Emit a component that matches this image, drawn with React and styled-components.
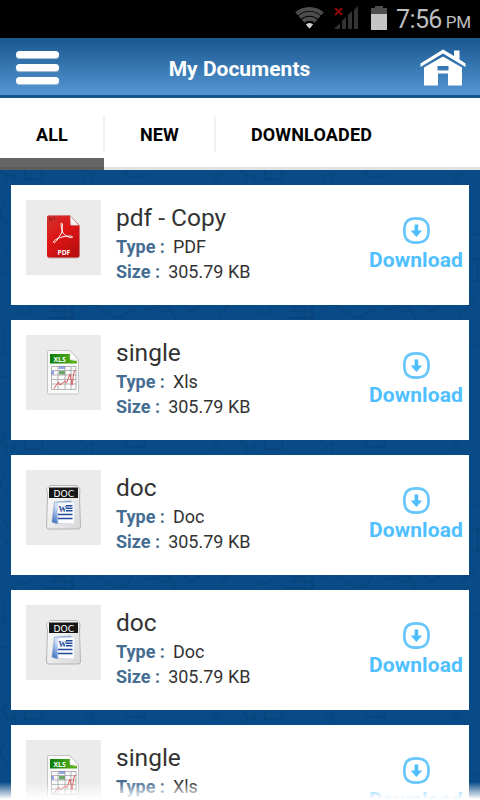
import React, { useState } from 'react'
import styled, { createGlobalStyle } from 'styled-components'

const colors = {
  navy: '#084b86',
  label: '#456d92',
  text: '#333333',
  sky: '#4fc0ff',
}

const docs = [
  { id: 1, name: 'pdf - Copy', type: 'PDF', size: '305.79 KB' },
  { id: 2, name: 'single', type: 'Xls', size: '305.79 KB' },
  { id: 3, name: 'doc', type: 'Doc', size: '305.79 KB' },
  { id: 4, name: 'doc', type: 'Doc', size: '305.79 KB' },
  { id: 5, name: 'single', type: 'Xls', size: '305.79 KB' },
]

const tabs = [
  { label: 'ALL', width: 104 },
  { label: 'NEW', width: 111 },
  { label: 'DOWNLOADED', width: 193 },
]

export default function App() {
  const [tab, setTab] = useState('ALL')

  return (
    <Screen>
      <GlobalStyle />
      <StatusBar>
        <StatusIcons />
        <Clock>7:56</Clock>
        <Meridiem>PM</Meridiem>
      </StatusBar>
      <Header>
        <MenuButton aria-label="Menu"><Line /><Line /><Line /></MenuButton>
        <Title>My Documents</Title>
        <HomeIcon />
      </Header>
      <Tabs>
        {tabs.map((t) => (
          <Tab key={t.label} $width={t.width} $active={tab === t.label} onClick={() => setTab(t.label)}>{t.label}</Tab>
        ))}
      </Tabs>
      <Content>
        <Doodles />
        <List>
          {docs.map((doc) => <DocumentCard key={doc.id} {...doc} />)}
        </List>
      </Content>
      <Fade />
    </Screen>
  )
}

function DocumentCard({ name, type, size }) {
  return (
    <Card>
      <Thumb>
        {type === 'PDF' && <PdfIcon />}
        {type === 'Xls' && <XlsIcon />}
        {type === 'Doc' && <DocIcon />}
      </Thumb>
      <Info>
        <Name>{name}</Name>
        <Meta><Label>Type :</Label><Value>{type}</Value></Meta>
        <Meta><Label>Size :</Label><Value>{size}</Value></Meta>
      </Info>
      <Download>
        <DownloadIcon />
        <DownloadText>Download</DownloadText>
      </Download>
    </Card>
  )
}

function StatusIcons() {
  return (
    <svg width="96" height="38" viewBox="294 0 96 38">
      <defs>
        <clipPath id="wifi"><path d="M309.500 28.500L294.500 11.500Q309.500 2 324.500 11.500Z" /></clipPath>
      </defs>
      <g clipPath="url(#wifi)" fill="none" stroke="#4d4d4d" strokeWidth="4">
        <circle cx="309.500" cy="28.500" r="19.600" />
        <circle cx="309.500" cy="28.500" r="14.700" />
        <circle cx="309.500" cy="28.500" r="9.800" />
        <circle cx="309.500" cy="28.500" r="3" fill="#d0d0d0" stroke="#d0d0d0" strokeWidth="5" />
      </g>
      <path d="M334 29L340 23V29ZM342 21L346 17V29H342ZM348 15L352 11V29H348ZM354 10L358 6V29H354Z" fill="#333" />
      <path d="M335 8L342 15M342 8L335 15" stroke="#8d0808" strokeWidth="2" />
      <path d="M371 8H375V6H383V8H387V14H371Z" fill="#4d4d4d" />
      <path d="M371 14H387V30H371Z" fill="#c5c5c5" />
    </svg>
  )
}

function HomeIcon() {
  return (
    <HomeSvg width="46" height="38" viewBox="0 0 46 38" fill="#fff">
      <path d="M.5 14.500L23 .5L34 7V1.500H39.500V10.500L45.500 14.500V18L23 4.500L.5 18Z" />
      <path fillRule="evenodd" d="M4 18.500L23 7.500L42 18.500V36.500H28V24.500H18V36.500H4ZM17.500 17V21.500H28.500V17Z" />
    </HomeSvg>
  )
}

function DownloadIcon() {
  return (
    <svg width="28" height="28" viewBox="0 0 28 28">
      <path d="M14.300 2.300C22.800 2.300 26.600 6 26.600 14.500S22.800 26.700 14.300 26.700S2.300 23 2.300 14.500S5.800 2.300 14.300 2.300Z" fill="none" stroke="#67c6fc" strokeWidth="2.700" />
      <path d="M12.600 8.500H16.200V14.500H20.200L14.400 21L8.700 14.500H12.600Z" fill="#4dbdfb" />
    </svg>
  )
}

function PdfIcon() {
  return (
    <svg width="75" height="75" viewBox="0 0 75 75">
      <defs>
        <linearGradient id="pdfRed" x1="0" y1="0" x2=".7" y2="1">
          <stop offset="0" stopColor="#cf3432" /><stop offset=".5" stopColor="#df1515" /><stop offset="1" stopColor="#b90f10" />
        </linearGradient>
      </defs>
      <path d="M22.500 15.500H44L53.500 26V56.500Q53.500 58.500 51.500 58.500H23.500Q21.500 58.500 21.500 56.500V17Q21.500 15.500 22.500 15.500Z" fill="#a99" opacity=".6" />
      <path d="M22.500 15.500H44L53.500 25.500V55.500Q53.500 57.500 51.500 57.500H23Q21 57.500 21 55.500V17Q21 15.500 22.500 15.500Z" fill="url(#pdfRed)" />
      <path d="M44 15.500L53 25.500L44.500 25.300Z" fill="#f5f5f5" stroke="#a77" strokeWidth=".4" />
      <path d="M23.500 20.500V17.500L25.500 20.500V17.500M27 17.500H28.500V20" fill="none" stroke="#8e191c" strokeWidth=".8" />
      <path d="M35.500 23C37 23 36.500 29 35.500 33C32.500 38 29.500 43.300 27.500 42.500C26.500 41 31 38.500 36 37C42 35.500 47 35.800 46.500 37.300C44 38.500 40 36 37.300 33.500C35.500 30 34.500 24 35.500 23Z" fill="none" stroke="#fff" strokeWidth="1" />
      <IconText x="31.500" y="54.900" fill="#fff" fontSize="7.300" textLength="12.700">PDF</IconText>
    </svg>
  )
}

function XlsIcon() {
  return (
    <svg width="75" height="75" viewBox="0 0 75 75">
      <defs>
        <linearGradient id="xlsGreen"><stop stopColor="#087d0a" /><stop offset="1" stopColor="#63b719" /></linearGradient>
      </defs>
      <path d="M23 15.500H44L52.500 24.500V57.500Q52.500 59 51 59H23Q21.500 59 21.500 57.500V17Q21.500 15.500 23 15.500Z" fill="#fafafa" stroke="#c4c4c4" />
      <path d="M24 19H44V25L51 26V28.500H24Z" fill="url(#xlsGreen)" />
      <path d="M44 16L52 25.500L44 24Z" fill="#fff" stroke="#ccc" strokeWidth=".5" />
      <IconText x="27.500" y="26.600" fill="#fff" fontSize="7.800" textLength="12.300">XLS</IconText>
      <path d="M33 31H39V34H33ZM25 36H28V39.500H25Z" fill="#90a7ec" />
      <path d="M33 36H39V39.500H33Z" fill="#6da86d" />
      <path d="M25.500 31.500H50M25.500 35.500H50M25.500 40H50M25.500 44.500H50M25.500 49H50M25.500 54.500H50M25.500 31.500V54.500M32 31.500V54.500M39 31.500V54.500M45 31.500V54.500M50 31.500V54.500" stroke="#888" strokeWidth=".6" fill="none" />
      <path d="M28 53.500L32.500 47L34 50L39 46L40.500 48L44 39L46 50L48 37L50 35" fill="none" stroke="#e04b4b" strokeWidth=".9" />
    </svg>
  )
}

function DocIcon() {
  return (
    <svg width="75" height="75" viewBox="0 0 75 75">
      <defs>
        <linearGradient id="docPaper" x1="0" x2="1" y2="1"><stop stopColor="#fff" /><stop offset="1" stopColor="#d8d8d8" /></linearGradient>
        <linearGradient id="docBlue" x1="1" y1="0" x2="0" y2="1"><stop stopColor="#6798df" /><stop offset=".5" stopColor="#d5e5ff" /><stop offset="1" stopColor="#2862b9" /></linearGradient>
      </defs>
      <path d="M24 15.500H51L54 19L53.500 26L54.500 57Q54.500 59 52 59H23Q20.500 59 20.500 57L21.500 25L20.500 19Z" fill="url(#docPaper)" stroke="#b5b5b5" />
      <path d="M23 17.500H52V28H23Z" fill="#171717" />
      <text x="27.500" y="26.500" fill="#fff" fontSize="8.800" fontFamily="DejaVu Sans" textLength="20.500" lengthAdjust="spacingAndGlyphs">DOC</text>
      <path d="M28.500 32L45 31L47 53L30 53.500L26 52Z" fill="url(#docBlue)" stroke="#8197b7" strokeWidth=".6" />
      <path d="M31.500 33L49 32L48.500 54L32 53.500Z" fill="#fafcff" stroke="#ccd4e2" strokeWidth=".6" />
      <text x="32.500" y="42" fill="#244a9b" fontSize="9" fontFamily="Liberation Serif" fontWeight="700" textLength="8" lengthAdjust="spacingAndGlyphs">W</text>
      <path d="M40 35.700H46.500M40 38.200H46.500M40 40.700H46.500M32 44.500H46.500M32 48.500H46.500" stroke="#244a9b" strokeWidth="1.500" />
    </svg>
  )
}

// faint school-supplies backdrop, visible only around the cards
function Doodles() {
  return (
    <Backdrop width="480" height="630" viewBox="0 170 480 630">
      <defs>
        <pattern id="supplies" width="240" height="270" patternUnits="userSpaceOnUse" y="170">
          <g fill="none" stroke="#063b70" strokeWidth="2" opacity=".38">
            <path d="M-4 -1Q12 3 5 13M25 -2V9H42V0M58 0Q68 -5 82 0M84 11Q85 4 92 4V12M126 -2V7H144V2" />
            <circle cx="14" cy="7" r="2" /><circle cx="216" cy="7" r="3" />
            <path d="M5 31L0 44L8 54M232 45L221 50L225 62L239 65M3 80Q20 96 2 106M229 89H238V111H225" />
            <path d="M15 138Q22 151 34 137M43 132H72V148H44M51 137H65M51 141H65M82 139Q94 128 110 145Q122 153 133 136M144 139L169 137L176 149M184 134Q190 148 204 132M218 147L235 129" />
            <circle cx="69" cy="146" r="5" /><circle cx="165" cy="136" r="6" />
            <path d="M4 160V184H-2M236 162L226 170L237 176M0 207Q15 205 13 222" />
            <path d="M4 274V265L13 258M18 267L34 276M18 276L34 267M45 264H69M57 264V272M115 265V280H124V264M146 280Q160 255 176 280M192 267L202 280L212 270" />
            <circle cx="20" cy="268" r="3" /><circle cx="32" cy="275" r="3" /><circle cx="91" cy="267" r="2" />
          </g>
        </pattern>
      </defs>
      <path d="M0 170H480V800H0Z" fill="url(#supplies)" />
    </Backdrop>
  )
}

const GlobalStyle = createGlobalStyle`
  * { box-sizing: border-box; }
  body { margin: 0; overflow: hidden; background: ${colors.navy}; font-family: Roboto, sans-serif; }
  svg { display: block; flex-shrink: 0; }
  button { font-family: inherit; }
`

const Screen = styled.div`
  position: relative;
  width: 480px;
  height: 800px;
  overflow: hidden;
`

const StatusBar = styled.div`
  height: 38px;
  background: #000;
  color: #bebebe;
  display: flex;
  align-items: baseline;
  padding-left: 294px;
  svg { align-self: flex-start; }
`

const Clock = styled.span`
  font-size: 25px;
  line-height: 40px;
  margin-left: 6px;
  letter-spacing: -0.6px;
`

const Meridiem = styled.span`
  font-size: 17px;
  margin-left: 4px;
  letter-spacing: -0.3px;
`

const Header = styled.header`
  height: 60px;
  background: linear-gradient(#19568e, #5497d4);
  border-bottom: 3px solid #115689;
  display: flex;
  align-items: center;
  justify-content: space-between;
  padding: 0 14px 0 16px;
`

const MenuButton = styled.button`
  width: 43px;
  height: 33px;
  padding: 0;
  border: 0;
  background: none;
  display: flex;
  flex-direction: column;
  justify-content: space-between;
  margin-top: 2px;
`

const Line = styled.span`
  width: 43px;
  height: 7px;
  border-radius: 4px;
  background: #fff;
  box-shadow: 0 1px 1px #a9c2dc;
`

const Title = styled.h1`
  margin: 4px 0 0;
  color: #fff;
  font-size: 21px;
  font-weight: 700;
  line-height: 24px;
`

const HomeSvg = styled.svg`
  margin-top: 3px;
`

const Tabs = styled.nav`
  height: 72px;
  background: #fff;
  display: flex;
  box-shadow: inset 0 -3px #e3e3e3;
`

const Tab = styled.button`
  width: ${props => props.$width}px;
  height: 72px;
  padding: 0;
  border: 0;
  background: none;
  color: #000;
  font-size: 18px;
  letter-spacing: 0.15px;
  font-weight: 700;
  position: relative;
  box-shadow: ${props => props.$active ? 'inset 0 -3px #5d5d5d, inset 0 -12px #666' : 'none'};

  &:not(:last-child)::after {
    content: '';
    position: absolute;
    top: 18px;
    right: -1px;
    width: 2px;
    height: 36px;
    background: #f1f1f1;
  }
`

const Content = styled.main`
  position: relative;
  height: 630px;
  overflow: hidden;
  background: ${colors.navy};
`

const Backdrop = styled.svg`
  position: absolute;
  inset: 0;
`

const List = styled.div`
  position: relative;
  display: flex;
  flex-direction: column;
  gap: 15px;
  padding: 15px 11px;
`

const Card = styled.article`
  height: 120px;
  flex-shrink: 0;
  background: #fff;
  display: flex;
  padding: 15px 6px 0 15px;
`

const Thumb = styled.div`
  width: 75px;
  height: 75px;
  background: #ebebeb;
`

const Info = styled.div`
  flex: 1;
  padding: 2px 0 0 15px;
`

const Name = styled.div`
  color: ${colors.text};
  font-size: 24.500px;
  line-height: 32px;
`

const Meta = styled.div`
  display: flex;
  font-size: 18px;
  line-height: 25px;
`

const Label = styled.span`
  color: ${colors.label};
  font-weight: 700;
`

const Value = styled.span`
  color: ${colors.text};
  margin-left: 8px;
`

const Download = styled.div`
  width: 94px;
  padding-top: 16px;
  display: flex;
  flex-direction: column;
  align-items: center;
`

const DownloadText = styled.span`
  color: ${colors.sky};
  font-size: 21px;
  letter-spacing: 0.1px;
  font-weight: 700;
  line-height: 28px;
  margin-top: 2px;
`

const IconText = styled.text.attrs({ lengthAdjust: 'spacingAndGlyphs' })`
  font-family: 'Open Sans', sans-serif;
  font-weight: 700;
`

const Fade = styled.div`
  position: absolute;
  left: 0;
  right: 0;
  bottom: 0;
  height: 18px;
  background: linear-gradient(rgba(255, 255, 255, 0), #fff 95%);
  pointer-events: none;
`
